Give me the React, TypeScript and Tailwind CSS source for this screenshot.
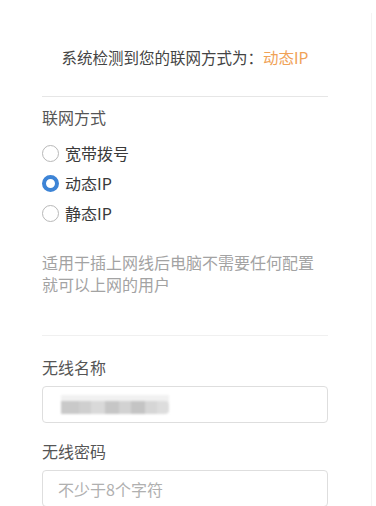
import React from "react";

function Radio({ checked, label }: { checked?: boolean; label: string }) {
  return (
    <div className="flex items-center h-[30px]">
      {checked ? (
        <span className="w-[17px] h-[17px] rounded-full border-[4.5px] border-[#3d84d6] bg-white box-border" />
      ) : (
        <span className="w-[17px] h-[17px] rounded-full border border-[#b8b8b8] bg-white box-border" />
      )}
      <span className="ml-[6px] text-[16px] leading-[22px] text-[#3a3a3a]">{label}</span>
    </div>
  );
}

export default function App() {
  return (
    <div
      className="w-[376px] h-[506px] overflow-hidden bg-white relative"
      style={{ fontFamily: '"Noto Sans CJK SC", "Noto Sans", sans-serif' }}
    >
      <div className="absolute right-[4px] top-[13px] bottom-0 w-px bg-[#f4f4f4]" />
      <div className="ml-[42px] w-[286px] flex flex-col">
        <div className="pt-[46px] text-center text-[15.5px] leading-[22px] text-[#444]">
          系统检测到您的联网方式为：<span className="text-[#f0a257]">动态IP</span>
        </div>
        <div className="mt-[28px] h-px bg-[#e6e6e6]" />
        <div className="mt-[9px] text-[16px] leading-[22px] text-[#555]">联网方式</div>
        <div className="mt-[10px] flex flex-col">
          <Radio label="宽带拨号" />
          <Radio checked label="动态IP" />
          <Radio label="静态IP" />
        </div>
        <div className="mt-[23px] text-[16px] leading-[22px] text-[#a3a3a3]">
          <p>适用于插上网线后电脑不需要任何配置</p>
          <p>就可以上网的用户</p>
        </div>
        <div className="mt-[40px] h-px bg-[#f0f0f0]" />
        <div className="mt-[20px] text-[16px] leading-[22px] text-[#555]">无线名称</div>
        <div className="mt-[8px] h-[37px] rounded-[4px] border border-[#dedede] flex items-center pl-[18px]">
          <div className="relative h-[22px] w-[108px] blur-[1px]">
            <div className="absolute left-0 top-[1px] w-[108px] h-[8px] bg-[#f1f1f1]" />
            <div className="absolute left-0 top-[7px] flex h-[13px]">
              <div className="w-[18px] bg-[#c9c9c9]" />
              <div className="w-[12px] bg-[#cfcfcf]" />
              <div className="w-[14px] bg-[#d9d9d9]" />
              <div className="w-[14px] bg-[#c6c6c6]" />
              <div className="w-[12px] bg-[#d2d2d2]" />
              <div className="w-[14px] bg-[#c4c4c4]" />
              <div className="w-[12px] bg-[#d6d6d6]" />
              <div className="w-[12px] bg-[#dddddd] rounded-r-[4px]" />
            </div>
          </div>
        </div>
        <div className="mt-[17px] text-[16px] leading-[22px] text-[#555]">无线密码</div>
        <div className="mt-[8px] h-[37px] rounded-[4px] border border-[#dedede] flex items-center pl-[15px]">
          <span className="text-[16px] leading-[22px] text-[#b0b0b0]">不少于8个字符</span>
        </div>
      </div>
    </div>
  );
}
